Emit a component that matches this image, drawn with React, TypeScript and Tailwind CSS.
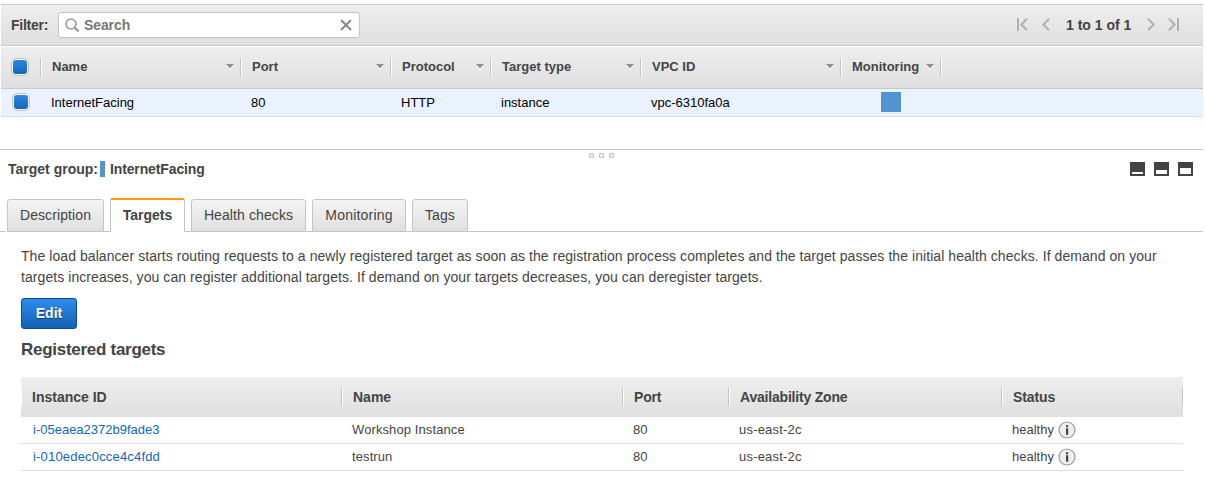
import React from "react";

const sep = "h-[18px] w-[2px] shrink-0 border-l border-[#c4c4c4] bg-white";

function Box() {
  return (
    <span className="flex size-[18px] shrink-0 items-center justify-center rounded-[5px] border border-[#c3c3c3] bg-[#f7f7f7]">
      <span className="size-[14px] rounded-[3px] bg-gradient-to-b from-[#2e88e0] to-[#1166bb]" />
    </span>
  );
}

function Caret() {
  return (
    <svg width="8" height="6" viewBox="0 0 8 6" className="shrink-0">
      <path d="M0 1h8L4 6z" fill="#fff" />
      <path d="M0 0h8L4 4.5z" fill="#8f8f8f" />
    </svg>
  );
}

function HeadCell({ w, label }: { w: string; label: string }) {
  return (
    <div className={`flex h-[18px] shrink-0 items-center ${w}`}>
      <span className={sep} />
      <span className="-mt-px ml-[10px] whitespace-nowrap font-bold">{label}</span>
      <span className="ml-auto mr-[6px] flex">
        <Caret />
      </span>
    </div>
  );
}

function Filter() {
  return (
    <div className="flex h-[42px] items-center border-y border-[#c8c8c8] bg-gradient-to-b from-[#eeeeee] to-[#dfdfdf] pl-[10px] pr-6">
      <span className="w-[47px] text-[14px] font-bold tracking-[-0.25px]">Filter:</span>
      <div className="flex h-[26px] w-[302px] items-center rounded-[3px] border border-[#c4c4c4] bg-white pl-[6px] pr-[7px]">
        <svg width="15" height="15" viewBox="0 0 15 15" fill="none" stroke="#999">
          <circle cx="6" cy="6" r="5" strokeWidth="1.6" />
          <path d="M9.7 9.7l3.8 3.8" strokeWidth="2.4" />
        </svg>
        <span className="ml-1 text-[14px] font-bold tracking-[-0.1px] text-[#777]">Search</span>
        <svg width="12" height="12" viewBox="0 0 12 12" className="ml-auto" stroke="#888" strokeWidth="2">
          <path d="M1 1l10 10M11 1L1 11" />
        </svg>
      </div>
      <div className="ml-auto flex items-center pb-px">
        <svg width="11" height="13" viewBox="0 0 11 13" fill="none" stroke="#b0b0b0" strokeWidth="2">
          <path d="M1 0v13M10 .7L4.3 6.5L10 12.3" />
        </svg>
        <svg width="8" height="13" viewBox="0 0 8 13" fill="none" stroke="#b0b0b0" strokeWidth="2" className="ml-[14px]">
          <path d="M7 .7L1.3 6.5L7 12.3" />
        </svg>
        <span className="-mb-px ml-[16px] w-[66px] whitespace-nowrap text-[14px] font-bold">1 to 1 of 1</span>
        <svg width="8" height="13" viewBox="0 0 8 13" fill="none" stroke="#b0b0b0" strokeWidth="2" className="ml-[15px]">
          <path d="M1 .7L6.7 6.5L1 12.3" />
        </svg>
        <svg width="11" height="13" viewBox="0 0 11 13" fill="none" stroke="#b0b0b0" strokeWidth="2" className="ml-[13px]">
          <path d="M1 .7L6.7 6.5L1 12.3M10 0v13" />
        </svg>
      </div>
    </div>
  );
}

function Tab({ label, w }: { label: string; w: string }) {
  return (
    <div className={`flex h-[33px] items-center justify-center rounded-t-[3px] border border-[#c4c4c4] bg-gradient-to-b from-[#f5f5f5] to-[#dfdfdf] pb-px text-[14px] whitespace-nowrap ${w}`}>
      {label}
    </div>
  );
}

function Pane({ h }: { h: string }) {
  return (
    <span className="flex h-[14px] w-[15px] flex-col justify-end bg-[#444] p-[2px]">
      <span className={`bg-white ${h}`} />
    </span>
  );
}

function Grip() {
  return (
    <span className="flex h-[5px] w-[5px] flex-col rounded-[1px] border border-[#c4c4c4] bg-[#ececec]" />
  );
}

function Info() {
  return (
    <svg width="18" height="18" viewBox="0 0 18 18" className="ml-[4px]">
      <circle cx="9" cy="9" r="8" fill="#eee" stroke="#999" strokeWidth="1.2" />
      <path d="M8 4.3h2.2v1.9H8zM8 7.2h2.2v6.6H8z" fill="#444" />
    </svg>
  );
}

function TargetHead({ label, w, t, first }: { label: string; w: string; t: string; first?: boolean }) {
  return (
    <div className={`flex h-[18px] shrink-0 items-center whitespace-nowrap ${w}`}>
      {first ? <span className="h-[18px] w-px bg-white" /> : <span className={sep} />}
      <span className={`ml-[10px] text-[14px] font-bold ${t}`}>{label}</span>
    </div>
  );
}

function TargetRow({ id, name, t, tn }: { id: string; name: string; t: string; tn: string }) {
  return (
    <div className="flex h-[27px] items-center border-b border-[#ddd] pl-3 text-[13px] whitespace-nowrap">
      <span className={`w-[319px] text-[#1166bb] ${t}`}>{id}</span>
      <span className={`w-[281px] ${tn}`}>{name}</span>
      <span className="w-[106px]">80</span>
      <span className="w-[273px] tracking-[0.2px]">us-east-2c</span>
      <span>healthy</span>
      <Info />
    </div>
  );
}

export default function App() {
  return (
    <div className="h-[481px] w-[1206px] overflow-hidden bg-white pt-1 font-['Liberation_Sans',sans-serif] text-[13px] leading-[18px] text-[#444]">
      <div className="ml-px w-[1202px]">
        <Filter />
        <div className="mt-px flex h-[42px] items-center border-b border-[#c8c8c8] bg-gradient-to-b from-[#eeeeee] to-[#dfdfdf] pb-px">
          <div className="w-[39px] pl-[10px]"><Box /></div>
          <HeadCell w="w-[200px]" label="Name" />
          <HeadCell w="w-[150px]" label="Port" />
          <HeadCell w="w-[100px]" label="Protocol" />
          <HeadCell w="w-[150px]" label="Target type" />
          <HeadCell w="w-[200px]" label="VPC ID" />
          <HeadCell w="w-[100px]" label="Monitoring" />
          <span className={sep} />
        </div>
        <div className="flex h-[28px] items-center border-b border-[#ddd] bg-[#eaf2ff] pb-px leading-[20px] text-black">
          <div className="w-[50px] pl-[11px]"><Box /></div>
          <span className="w-[200px] pt-px">InternetFacing</span>
          <span className="w-[150px] pt-px">80</span>
          <span className="w-[100px] pt-px">HTTP</span>
          <span className="w-[150px] pt-px">instance</span>
          <span className="w-[230px] pt-px">vpc-6310fa0a</span>
          <span className="size-5 bg-[#5294d0]" />
        </div>
      </div>
      <div className="mt-8 flex h-[9px] w-[1203px] items-center justify-center gap-[5px] border-t border-[#c8c8c8] pt-[3px]">
        <Grip />
        <Grip />
        <Grip />
      </div>
      <div className="flex h-[23px] w-[1193px] items-center pb-px pl-2 text-[14px] font-bold">
        <span className="w-[92px]">Target group:</span>
        <span className="h-4 w-[5px] bg-[#5294d0]" />
        <span className="ml-[5px] tracking-[-0.13px]">InternetFacing</span>
        <div className="ml-auto flex gap-[9px]">
          <Pane h="h-[2px]" />
          <Pane h="h-[4px]" />
          <Pane h="h-[6px]" />
        </div>
      </div>
      <div className="mt-[17px] flex h-[34px] w-[1203px] items-end">
        <span className="h-px w-[6px] bg-[#c4c4c4]" />
        <Tab label="Description" w="ml-px w-[97px] tracking-[0.1px]" />
        <span className="h-px w-[6px] bg-[#c4c4c4]" />
        <div className="flex h-[34px] w-[75px] items-center justify-center rounded-t-[2px] border-x border-t-2 border-x-[#c4c4c4] border-t-[#ff9900] pb-[2px] text-[14px] font-bold">Targets</div>
        <span className="h-px w-[6px] bg-[#c4c4c4]" />
        <Tab label="Health checks" w="w-[115px] tracking-[0.1px]" />
        <span className="h-px w-[6px] bg-[#c4c4c4]" />
        <Tab label="Monitoring" w="w-[94px] tracking-[0.2px]" />
        <span className="h-px w-[6px] bg-[#c4c4c4]" />
        <Tab label="Tags" w="w-[56px] tracking-[0.1px]" />
        <span className="h-px grow bg-[#c4c4c4]" />
      </div>
      <div className="ml-[21px] w-[1162px] pt-[14px]">
        <p className="text-[14px] leading-[21px] tracking-[0.065px] whitespace-nowrap">
          The load balancer starts routing requests to a newly registered target as soon as the registration process completes and the target passes the initial health checks. If demand on your
          <br />
          targets increases, you can register additional targets. If demand on your targets decreases, you can deregister targets.
        </p>
        <button className="mt-[10px] flex h-[31px] w-[56px] items-center justify-center rounded-[3px] border border-[#0d4b8b] bg-gradient-to-b from-[#2e8ded] to-[#1262b5] pb-px text-[14px] font-bold text-white [text-shadow:0_1px_1px_#0b3d70]">Edit</button>
        <h2 className="mt-[10px] text-[17px] leading-[21px] font-bold tracking-[-0.28px]">Registered targets</h2>
        <div className="mt-[17px] flex h-10 items-center bg-gradient-to-b from-[#eeeeee] to-[#dfdfdf]">
          <TargetHead first label="Instance ID" w="w-[320px]" t="" />
          <TargetHead label="Name" w="w-[281px]" t="" />
          <TargetHead label="Port" w="w-[106px]" t="tracking-[-0.2px]" />
          <TargetHead label="Availability Zone" w="w-[273px]" t="tracking-[-0.2px]" />
          <TargetHead label="Status" w="w-[181px]" t="tracking-[-0.1px]" />
          <span className="h-[18px] w-px bg-[#c4c4c4]" />
        </div>
        <TargetRow id="i-05eaea2372b9fade3" name="Workshop Instance" t="" tn="tracking-[0.1px]" />
        <TargetRow id="i-010edec0cce4c4fdd" name="testrun" t="tracking-[0.18px]" tn="tracking-[0.1px]" />
      </div>
    </div>
  );
}
